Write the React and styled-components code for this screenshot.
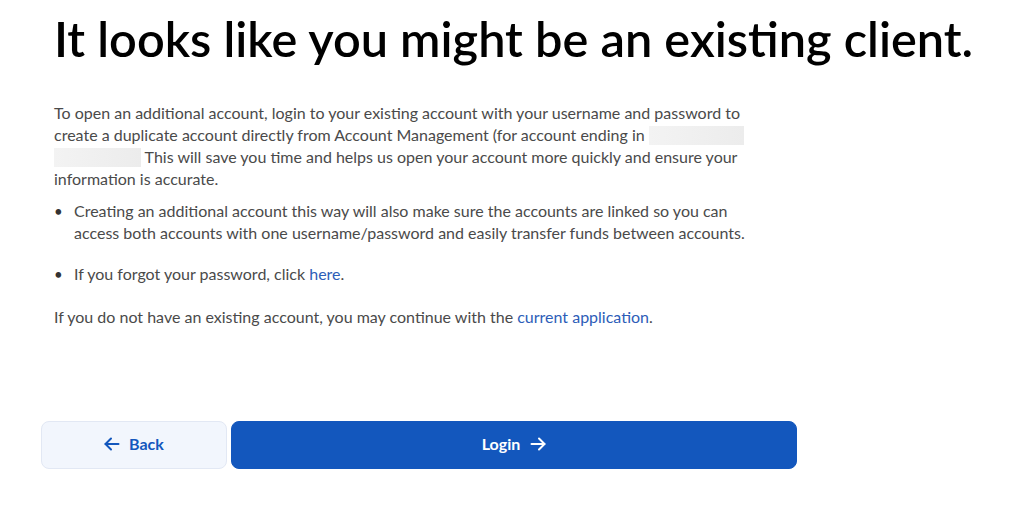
import React from 'react'
import styled, { createGlobalStyle } from 'styled-components'

const GlobalStyle = createGlobalStyle`
  body {
    margin: 0;
    background: #ffffff;
    font-family: Lato, "Open Sans", sans-serif;
  }
`

const Page = styled.div`
  width: 1010px;
  height: 511px;
  padding: 10px 0 0 41px;
  box-sizing: border-box;
`

const Titulo = styled.h1`
  margin: 0 0 0 13px;
  font-size: 48.7px;
  line-height: 56px;
  font-weight: 600;
  color: #000000;
  white-space: nowrap;
`

const Content = styled.div`
  width: 700px;
  margin: 36px 0 0 13px;
  color: #4a4a4a;
  font-size: 16px;
  line-height: 22px;
`

const Paragraph = styled.p`
  margin: ${props => props.$top || 0}px 0 0;
`

const Masked = styled.span`
  display: inline-block;
  width: ${props => props.$w}px;
  height: 19px;
  vertical-align: -4px;
  background: linear-gradient(to right, #f3f3f3, #ececec);
`

const List = styled.ul`
  margin: 10px 0 0;
  padding: 0;
  list-style: none;
`

const Item = styled.li`
  display: flex;
  margin-bottom: ${props => props.$gap || 0}px;
`

const Bullet = styled.span`
  flex: 0 0 20px;
  &::before {
    content: '•';
    font-size: 15px;
    color: #333;
  }
`

const Link = styled.a`
  color: #2d5db8;
  text-decoration: none;
`

const Buttons = styled.div`
  display: flex;
  gap: 4px;
  margin-top: 93px;
`

const Button = styled.button`
  display: flex;
  align-items: center;
  justify-content: center;
  gap: ${props => (props.$primary ? 10 : 9)}px;
  height: 48px;
  width: ${props => props.$w}px;
  padding: 0 0 3px;
  border-radius: 8px;
  font-family: Lato, sans-serif;
  font-size: 16px;
  font-weight: 700;
  cursor: pointer;
  border: 1px solid ${props => (props.$primary ? '#1357bd' : '#e2e8f4')};
  background: ${props => (props.$primary ? '#1357bd' : '#f2f6fd')};
  color: ${props => (props.$primary ? '#ffffff' : '#1357bd')};
`

const Arrow = ({ left }) => (
  <svg width="16" height="16" viewBox="0 0 16 16" fill="none" stroke="currentColor" strokeWidth="2" strokeLinecap="round" strokeLinejoin="round">
    {left ? (
      <>
        <path d="M14.5 8H1.5" />
        <path d="M7 2.5L1.5 8 7 13.5" />
      </>
    ) : (
      <>
        <path d="M1.5 8h13" />
        <path d="M9 2.5l5.5 5.5L9 13.5" />
      </>
    )}
  </svg>
)

const App = () => {
  return (
    <Page>
      <GlobalStyle />
      <Titulo>It looks like you might be an existing client.</Titulo>
      <Content>
        <Paragraph>
          To open an additional account, login to your existing account with your username and password to
          create a duplicate account directly from Account Management (for account ending in <Masked $w={95} />{' '}
          <Masked $w={87} /> This will save you time and helps us open your account more quickly and ensure your
          information is accurate.
        </Paragraph>
        <List>
          <Item $gap={19}>
            <Bullet />
            <span>
              Creating an additional account this way will also make sure the accounts are linked so you can
              access both accounts with one username/password and easily transfer funds between accounts.
            </span>
          </Item>
          <Item>
            <Bullet />
            <span>
              If you forgot your password, click <Link href="#">here</Link>.
            </span>
          </Item>
        </List>
        <Paragraph $top={21}>
          If you do not have an existing account, you may continue with the <Link href="#">current application</Link>.
        </Paragraph>
      </Content>
      <Buttons>
        <Button $w={186}>
          <Arrow left />
          Back
        </Button>
        <Button $primary $w={566}>
          Login
          <Arrow />
        </Button>
      </Buttons>
    </Page>
  )
}

export default App
